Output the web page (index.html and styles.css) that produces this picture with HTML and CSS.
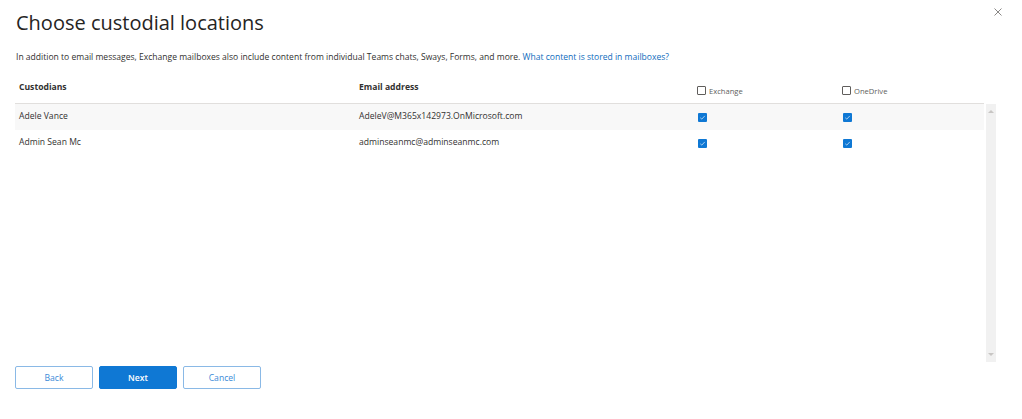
FILE: index.html
```html
<!DOCTYPE html>
<html>
<head>
<meta charset="utf-8">
<link rel="stylesheet" href="styles.css">
</head>
<body>
<div class="panel">
  <button class="close" aria-label="Close">
    <svg width="8" height="8" viewBox="0 0 8 8"><path d="M0.5 0.5L7.5 7.5M7.5 0.5L0.5 7.5" stroke="#8a8886" stroke-width="1" fill="none"/></svg>
  </button>
  <h1 class="title">Choose custodial locations</h1>
  <p class="desc">In addition to email messages, Exchange mailboxes also include content from individual Teams chats, Sways, Forms, and more. <a class="link" href="#">What content is stored in mailboxes?</a></p>
  <div class="grid-wrap">
    <div class="table">
      <div class="row head">
        <div class="cell c1 hd">Custodians</div>
        <div class="cell c2 hd">Email address</div>
        <div class="cell c3 hcb"><span class="box"></span>Exchange</div>
        <div class="cell c4 hcb"><span class="box"></span>OneDrive</div>
      </div>
      <div class="body">
        <div class="rows">
          <div class="row item alt">
            <div class="cell c1">Adele Vance</div>
            <div class="cell c2">AdeleV@M365x142973.OnMicrosoft.com</div>
            <div class="cell c3"><span class="chk"><svg width="9" height="9" viewBox="0 0 9 9"><path d="M2.3 4.8L3.8 6.1L6.8 2.9" stroke="#cfe4f7" stroke-width="0.8" fill="none"/></svg></span></div>
            <div class="cell c4"><span class="chk"><svg width="9" height="9" viewBox="0 0 9 9"><path d="M2.3 4.8L3.8 6.1L6.8 2.9" stroke="#cfe4f7" stroke-width="0.8" fill="none"/></svg></span></div>
          </div>
          <div class="row item">
            <div class="cell c1">Admin Sean Mc</div>
            <div class="cell c2">adminseanmc@adminseanmc.com</div>
            <div class="cell c3"><span class="chk"><svg width="9" height="9" viewBox="0 0 9 9"><path d="M2.3 4.8L3.8 6.1L6.8 2.9" stroke="#cfe4f7" stroke-width="0.8" fill="none"/></svg></span></div>
            <div class="cell c4"><span class="chk"><svg width="9" height="9" viewBox="0 0 9 9"><path d="M2.3 4.8L3.8 6.1L6.8 2.9" stroke="#cfe4f7" stroke-width="0.8" fill="none"/></svg></span></div>
          </div>
        </div>
        <div class="scrollbar">
          <svg class="arr" width="6" height="4" viewBox="0 0 6 4"><path d="M0 4L3 1L6 4Z" fill="#c8c6c4"/></svg>
          <svg class="arr" width="6" height="4" viewBox="0 0 6 4"><path d="M0 0L6 0L3 3Z" fill="#c8c6c4"/></svg>
        </div>
      </div>
    </div>
  </div>
  <div class="actions">
    <button class="btn">Back</button>
    <button class="btn primary">Next</button>
    <button class="btn">Cancel</button>
  </div>
</div>
</body>
</html>
```
FILE: styles.css
```css
* { box-sizing: border-box; }
html, body { margin: 0; padding: 0; background: #fff; }
body {
  font-family: "Open Sans", "Noto Sans", sans-serif;
  color: #323130;
  width: 1022px;
  height: 419px;
  overflow: hidden;
}
.panel {
  position: relative;
  height: 419px;
  padding: 0 0 0 15px;
  display: flex;
  flex-direction: column;
}
.close {
  position: absolute;
  top: 8px;
  right: 20px;
  border: 0;
  background: none;
  padding: 0;
  width: 8px;
  height: 8px;
  display: flex;
}
.title {
  margin: 10px 0 0 1px;
  font-size: 20px;
  font-weight: 400;
  line-height: 26px;
  color: #252423;
}
.desc {
  margin: 15px 0 0 1px;
  font-size: 8.55px;
  line-height: 12px;
  color: #323130;
}
.link { color: #0f6cbd; text-decoration: none; }
.grid-wrap { margin-top: 13px; width: 982px; }
.table { display: flex; flex-direction: column; }
.row { display: flex; }
.head {
  height: 28px;
  width: 969px;
  border-bottom: 1px solid #e1dfdd;
}
.cell { padding-left: 4px; font-size: 8.6px; }
.c1 { width: 340px; }
.c2 { width: 342px; }
.c3 { width: 145px; }
.c4 { width: 142px; }
.hd { font-weight: 700; padding-top: 5px; color: #323130; }
.hcb {
  display: flex;
  align-items: center;
  padding-top: 2px;
  padding-left: 0;
  color: #605e5c;
  font-size: 7.6px;
}
.c3.hcb { padding-left: 0; }
.box {
  width: 9px;
  height: 9px;
  border: 1px solid #605e5c;
  margin-right: 3px;
  border-radius: 1px;
}
.body { display: flex; height: 258px; }
.rows { width: 969px; }
.item {
  height: 26px;
  align-items: flex-start;
  color: #323130;
}
.item .cell { padding-top: 6px; }
.item .c3, .item .c4 { padding-left: 1px; padding-top: 9px; }
.alt { background: #f8f8f8; }
.chk {
  display: block;
  width: 9px;
  height: 9px;
  background: #0f78d4;
  border-radius: 1px;
}
.chk svg { display: block; }
.scrollbar {
  margin-left: 2px;
  width: 10px;
  background: #f1f1f1;
  display: flex;
  flex-direction: column;
  justify-content: space-between;
  align-items: center;
  padding: 5px 0 5px;
}
.arr { display: block; }
.actions {
  display: flex;
  gap: 6px;
  margin-top: 4px;
}
.btn {
  width: 78px;
  height: 23px;
  border: 1px solid #8ab9e6;
  border-radius: 2px;
  background: #fff;
  color: #3a8ad8;
  font-family: inherit;
  font-size: 8.6px;
  padding: 0;
}
.primary {
  background: #0f78d4;
  border-color: #0f78d4;
  color: #fff;
  font-weight: 600;
}
```
